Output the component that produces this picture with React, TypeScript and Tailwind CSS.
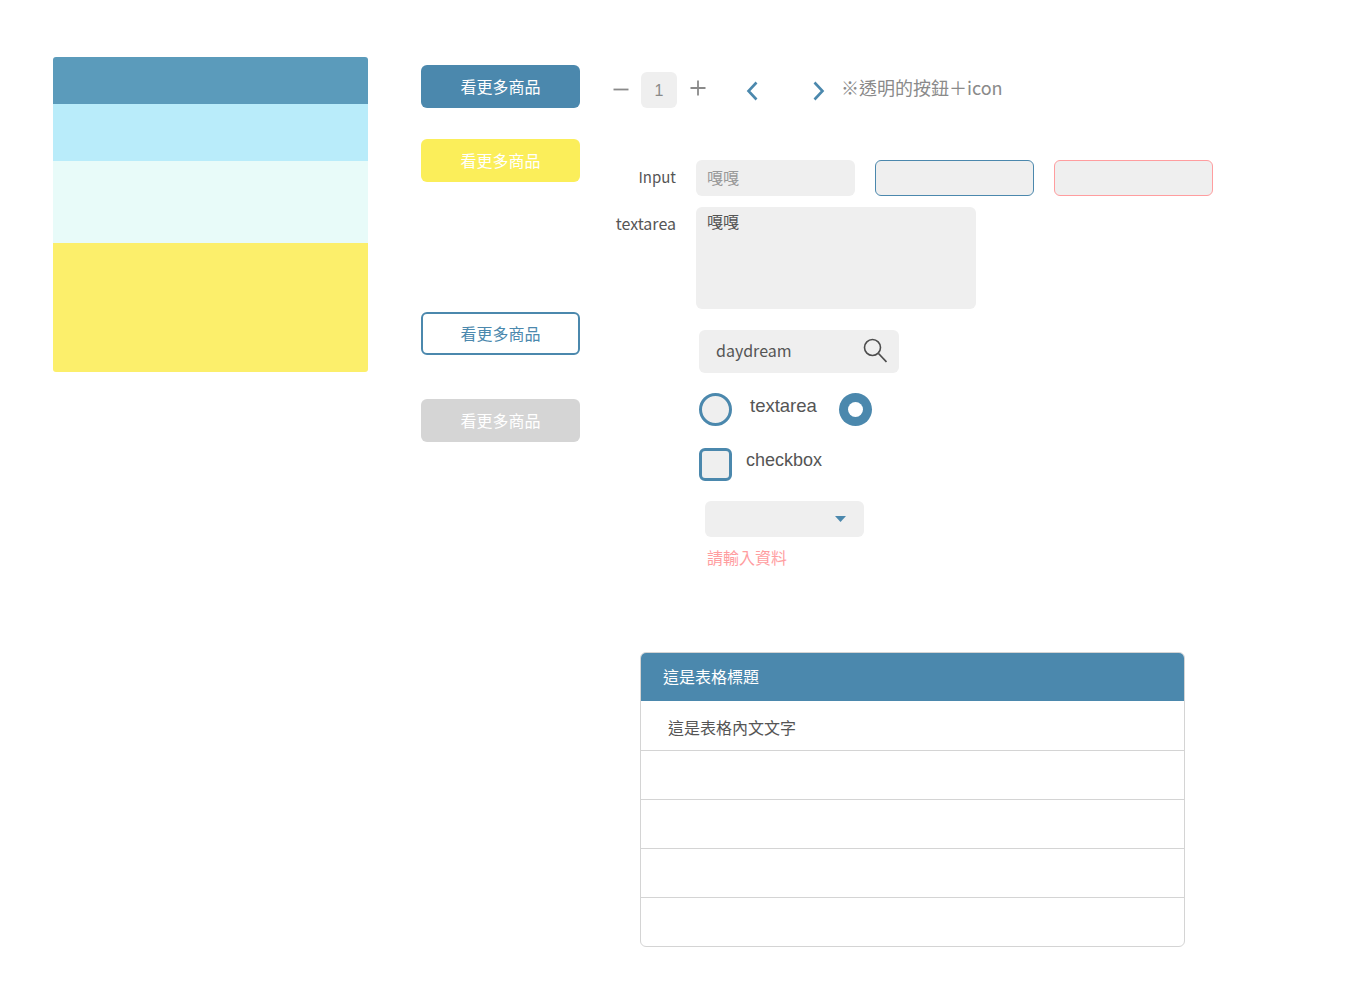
const font = "font-['Noto_Sans_CJK_TC','Noto_Sans',sans-serif]"

function ColorBars() {
  return (
    <div className="w-[315px] shrink-0 rounded-[3px] overflow-hidden">
      <div className="h-[47px] bg-[#5b9bbb]" />
      <div className="h-[57px] bg-[#b9ecfa]" />
      <div className="h-[82px] bg-[#e8fbf9]" />
      <div className="h-[129px] bg-[#fcef6b]" />
    </div>
  )
}

function Btn({ className }: { className: string }) {
  return (
    <button className={`w-[159px] h-[43px] rounded-[6px] flex items-center justify-center pb-[2px] text-[16px] ${className}`}>
      看更多商品
    </button>
  )
}

function Stepper() {
  return (
    <div className="flex items-center h-9 text-[#808080]">
      <svg width="16" height="16" viewBox="0 0 16 16" className="-mt-[2px]">
        <path d="M0.5 8.5h15" stroke="#8a8a8a" strokeWidth="1.8" />
      </svg>
      <div className="ml-[12px] w-9 h-9 rounded-[6px] bg-[#efefef] flex items-center justify-center text-[16px] text-[#8a8a8a] pt-[1px] font-['Liberation_Sans',sans-serif]">1</div>
      <svg width="16" height="16" viewBox="0 0 16 16" className="ml-[13px] -mt-[4px]">
        <path d="M0.5 8h15M8 0.5v15" stroke="#8a8a8a" strokeWidth="1.8" />
      </svg>
      <svg width="12" height="20" viewBox="0 0 12 20" className="ml-[40px] mt-[2px]">
        <path d="M10.5 1.5L2.5 10l8 8.5" fill="none" stroke="#4b88ad" strokeWidth="2.6" />
      </svg>
      <svg width="12" height="20" viewBox="0 0 12 20" className="ml-[55px] mt-[2px]">
        <path d="M1.5 1.5L9.5 10l-8 8.5" fill="none" stroke="#4b88ad" strokeWidth="2.6" />
      </svg>
      <span className="ml-[16px] text-[18px] leading-none -mt-[7px] text-[#8a8a8a] whitespace-nowrap">※透明的按鈕＋icon</span>
    </div>
  )
}

function Fields() {
  return (
    <div className="mt-[52px] text-[#555]">
      <div className="flex">
        <span className="w-[63px] text-right text-[15px] leading-[34px]">Input</span>
        <div className="ml-5 w-[159px] h-9 rounded-[6px] bg-[#efefef] pl-[11px] text-[16px] leading-[34px] text-[#999]">嘎嘎</div>
        <div className="ml-5 w-[159px] h-9 rounded-[6px] bg-[#efefef] border border-[#4b88ad]" />
        <div className="ml-5 w-[159px] h-9 rounded-[6px] bg-[#efefef] border border-[#ff9d9f]" />
      </div>
      <div className="flex mt-[11px]">
        <span className="w-[63px] text-right text-[16px] leading-[32px] whitespace-nowrap">textarea</span>
        <div className="ml-5 w-[280px] h-[102px] rounded-[6px] bg-[#efefef] pl-[11px] pt-[2px] text-[16px] leading-[24px] text-[#555]">嘎嘎</div>
      </div>
    </div>
  )
}

function Controls() {
  return (
    <div className="ml-[86px] mt-[21px] text-[#555]">
      <div className="w-[200px] h-[43px] rounded-[6px] bg-[#efefef] pl-[17px] pr-3 flex items-center justify-between">
        <span className="text-[16px] -mt-[3px]">daydream</span>
        <svg width="24" height="25" viewBox="0 0 24 25" className="-mt-[3px]">
          <circle cx="9.5" cy="9.5" r="8" fill="none" stroke="#4d4d4d" strokeWidth="1.6" />
          <path d="M15.5 15.5L23.5 24" stroke="#4d4d4d" strokeWidth="1.8" />
        </svg>
      </div>
      <div className="flex items-start mt-[20px]">
        <div className="w-[33px] h-[33px] rounded-full bg-[#efefef] border-[3px] border-[#4b88ad]" />
        <span className="ml-[18px] w-[68px] text-[18.5px] leading-[26px] whitespace-nowrap font-['Liberation_Sans',sans-serif]">textarea</span>
        <div className="ml-[21px] w-[33px] h-[33px] rounded-full bg-[#4b88ad] flex items-center justify-center">
          <div className="w-[15px] h-[15px] rounded-full bg-white" />
        </div>
      </div>
      <div className="flex items-start mt-[22px]">
        <div className="w-[33px] h-[33px] rounded-[6px] bg-[#efefef] border-[3px] border-[#4b88ad]" />
        <span className="ml-[14px] text-[18px] leading-[24px] font-['Liberation_Sans',sans-serif]">checkbox</span>
      </div>
      <div className="ml-[6px] mt-[20px] w-[159px] h-9 rounded-[6px] bg-[#efefef] flex items-center justify-end pr-[18px]">
        <svg width="11" height="6" viewBox="0 0 11 6"><path d="M0 0h11L5.5 6z" fill="#4b88ad" /></svg>
      </div>
      <div className="ml-[8px] mt-[8px] text-[16px] leading-6 text-[#ff9d9f]">請輸入資料</div>
    </div>
  )
}

function DataTable() {
  return (
    <div className="ml-[27px] mt-[83px] w-[545px] rounded-[6px] border border-[#d4d4d4] overflow-hidden">
      <div className="h-[48px] bg-[#4b88ad] pl-[22px] text-[16px] leading-[46px] text-white">這是表格標題</div>
      <div className="h-[50px] pl-[27px] text-[16px] leading-[52px] text-[#555] border-b border-[#d4d4d4]">這是表格內文文字</div>
      <div className="h-[49px] border-b border-[#d4d4d4]" />
      <div className="h-[49px] border-b border-[#d4d4d4]" />
      <div className="h-[49px] border-b border-[#d4d4d4]" />
      <div className="h-[48px]" />
    </div>
  )
}

export default function App() {
  return (
    <div className={`min-h-[995px] bg-white pt-[57px] pl-[53px] flex items-start ${font}`}>
      <ColorBars />
      <div className="ml-[53px] mt-2 shrink-0">
        <Btn className="bg-[#4b88ad] text-white" />
        <Btn className="mt-[31px] bg-[#fbee5a] text-white" />
        <Btn className="mt-[130px] bg-white border-2 border-[#4b88ad] text-[#4b88ad]" />
        <Btn className="mt-[44px] bg-[#d5d5d5] text-white" />
      </div>
      <div className="ml-[33px] mt-[15px] shrink-0">
        <Stepper />
        <Fields />
        <Controls />
        <DataTable />
      </div>
    </div>
  )
}
